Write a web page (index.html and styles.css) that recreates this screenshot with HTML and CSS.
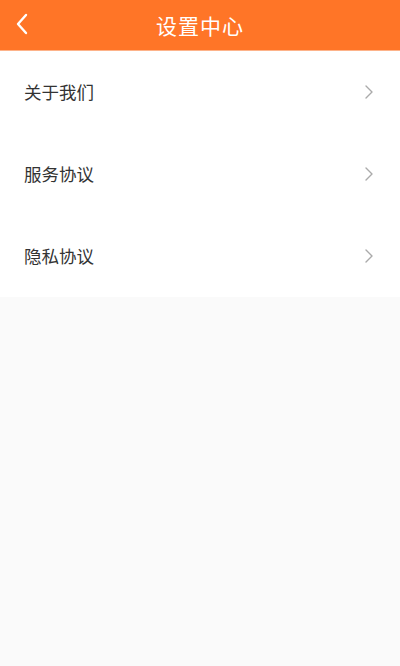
FILE: index.html
```html
<!DOCTYPE html>
<html lang="zh-CN">
<head>
    <meta charset="UTF-8">
    <meta name="viewport" content="width=device-width, initial-scale=1.0">
    <title>设置中心</title>
    <link rel="stylesheet" href="styles.css">
</head>
<body>

    <!-- 顶部导航栏 -->
    <div class="header">
        <span class="back">
            <svg width="14" height="22" viewBox="0 0 14 22">
                <path d="M11 2 L3 11 L11 20" fill="none" stroke="#fff" stroke-width="2.4" stroke-linecap="round" stroke-linejoin="round"/>
            </svg>
        </span>
        <h1>设置中心</h1>
    </div>

    <!-- 设置列表 -->
    <div class="list">
        <div class="item">
            <span>关于我们</span>
            <svg class="arrow" width="10" height="16" viewBox="0 0 10 16">
                <path d="M2 2 L8 8 L2 14" fill="none" stroke="#aaa" stroke-width="1.4" stroke-linecap="round" stroke-linejoin="round"/>
            </svg>
        </div>
        <div class="item">
            <span>服务协议</span>
            <svg class="arrow" width="10" height="16" viewBox="0 0 10 16">
                <path d="M2 2 L8 8 L2 14" fill="none" stroke="#aaa" stroke-width="1.4" stroke-linecap="round" stroke-linejoin="round"/>
            </svg>
        </div>
        <div class="item">
            <span>隐私协议</span>
            <svg class="arrow" width="10" height="16" viewBox="0 0 10 16">
                <path d="M2 2 L8 8 L2 14" fill="none" stroke="#aaa" stroke-width="1.4" stroke-linecap="round" stroke-linejoin="round"/>
            </svg>
        </div>
    </div>

</body>
</html>
```

FILE: styles.css
```css
body {
    margin: 0;
    padding: 0;
    background-color: #fafafa;
    font-family: "Noto Sans CJK SC", "Noto Sans", sans-serif;
    min-height: 666px;
}

.header {
    box-sizing: border-box;
    height: 51px;
    padding-bottom: 1px;
    background-color: #ff7527;
    display: flex;
    align-items: center;
    justify-content: center;
    position: relative;
    border-bottom: 1px solid #fdb38a;
}

.header h1 {
    margin: 0;
    font-size: 21px;
    font-weight: normal;
    color: #fff;
    letter-spacing: 1px;
}

.header .back {
    position: absolute;
    left: 15px;
    top: 13px;
    display: flex;
}

.list {
    background-color: #fff;
}

.item {
    height: 82px;
    display: flex;
    align-items: center;
    justify-content: space-between;
    padding: 0 26px 0 24px;
    font-size: 17.5px;
    color: #333;
}

.item span {
    margin-top: -2px;
}

.item .arrow {
    display: block;
}
```
